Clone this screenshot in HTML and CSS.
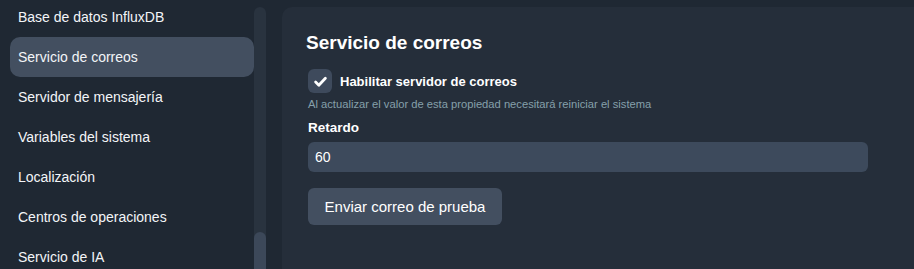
FILE: index.html
```html
<!DOCTYPE html>
<html lang="es">
<head>
<meta charset="utf-8">
<link rel="stylesheet" href="styles.css">
</head>
<body>
<div class="app">
  <aside class="sidebar">
    <ul class="nav">
      <li class="nav-item">Base de datos InfluxDB</li>
      <li class="nav-item active">Servicio de correos</li>
      <li class="nav-item">Servidor de mensajería</li>
      <li class="nav-item">Variables del sistema</li>
      <li class="nav-item">Localización</li>
      <li class="nav-item">Centros de operaciones</li>
      <li class="nav-item">Servicio de IA</li>
    </ul>
    <div class="scrollbar"><div class="thumb"></div></div>
  </aside>
  <main class="panel">
    <h1 class="title">Servicio de correos</h1>
    <label class="check-row">
      <span class="checkbox">
        <svg viewBox="0 0 16 16" width="15" height="15"><path d="M2.8 8.6l3.4 3.3L13.2 4.6" fill="none" stroke="#fff" stroke-width="3" stroke-linecap="round" stroke-linejoin="round"/></svg>
      </span>
      <span class="check-label">Habilitar servidor de correos</span>
    </label>
    <p class="hint">Al actualizar el valor de esta propiedad necesitará reiniciar el sistema</p>
    <div class="field-label">Retardo</div>
    <div class="input">60</div>
    <button class="btn">Enviar correo de prueba</button>
  </main>
</div>
</body>
</html>
```
FILE: styles.css
```css
html, body {
  margin: 0;
  padding: 0;
  background: #1f2833;
  font-family: "Liberation Sans", Arial, sans-serif;
  color: #ffffff;
  height: 269px;
  overflow: hidden;
}
.app {
  display: flex;
  height: 269px;
}
.sidebar {
  display: flex;
  padding-left: 10px;
  flex: 0 0 auto;
}
.nav {
  list-style: none;
  margin: -3px 0 0 0;
  padding: 0;
  width: 244px;
}
.nav-item {
  height: 40px;
  line-height: 40px;
  padding-left: 8px;
  font-size: 14px;
  border-radius: 10px;
  color: #f3f5f8;
}
.nav-item.active {
  background: #434f60;
}
.scrollbar {
  width: 12px;
  margin-top: 7px;
  background: #29333f;
  border-radius: 6px 6px 0 0;
  display: flex;
  flex-direction: column;
  justify-content: flex-end;
}
.thumb {
  height: 37px;
  background: #3c4859;
  border-radius: 6px 6px 0 0;
}
.panel {
  flex: 1;
  margin: 7px 0 0 16px;
  background: #252e3a;
  border-radius: 10px 0 0 0;
  padding: 0 0 0 26px;
}
.title {
  margin: 23px 0 0 -2px;
  font-size: 19px;
  font-weight: bold;
  line-height: 26px;
}
.check-row {
  display: flex;
  align-items: center;
  margin-top: 13px;
  height: 24px;
}
.checkbox {
  width: 24px;
  height: 24px;
  border-radius: 6px;
  background: #3e4a5c;
  display: flex;
  align-items: center;
  justify-content: center;
}
.check-label {
  margin-left: 8px;
  font-size: 13px;
  font-weight: bold;
}
.hint {
  margin: 3px 0 0 0;
  font-size: 11.2px;
  line-height: 16px;
  color: #86a0ab;
}
.field-label {
  margin-top: 6px;
  font-size: 13.5px;
  font-weight: bold;
  line-height: 20px;
}
.input {
  margin-top: 4px;
  width: 560px;
  height: 30px;
  box-sizing: border-box;
  background: #3d4a5c;
  border-radius: 6px;
  padding-left: 7px;
  font-size: 14px;
  line-height: 30px;
}
.btn {
  display: block;
  margin-top: 16px;
  width: 194px;
  height: 37px;
  border: 0;
  border-radius: 6px;
  background: #434f60;
  color: #ffffff;
  font-family: "Liberation Sans", Arial, sans-serif;
  font-size: 15px;
  padding: 0;
}
```
